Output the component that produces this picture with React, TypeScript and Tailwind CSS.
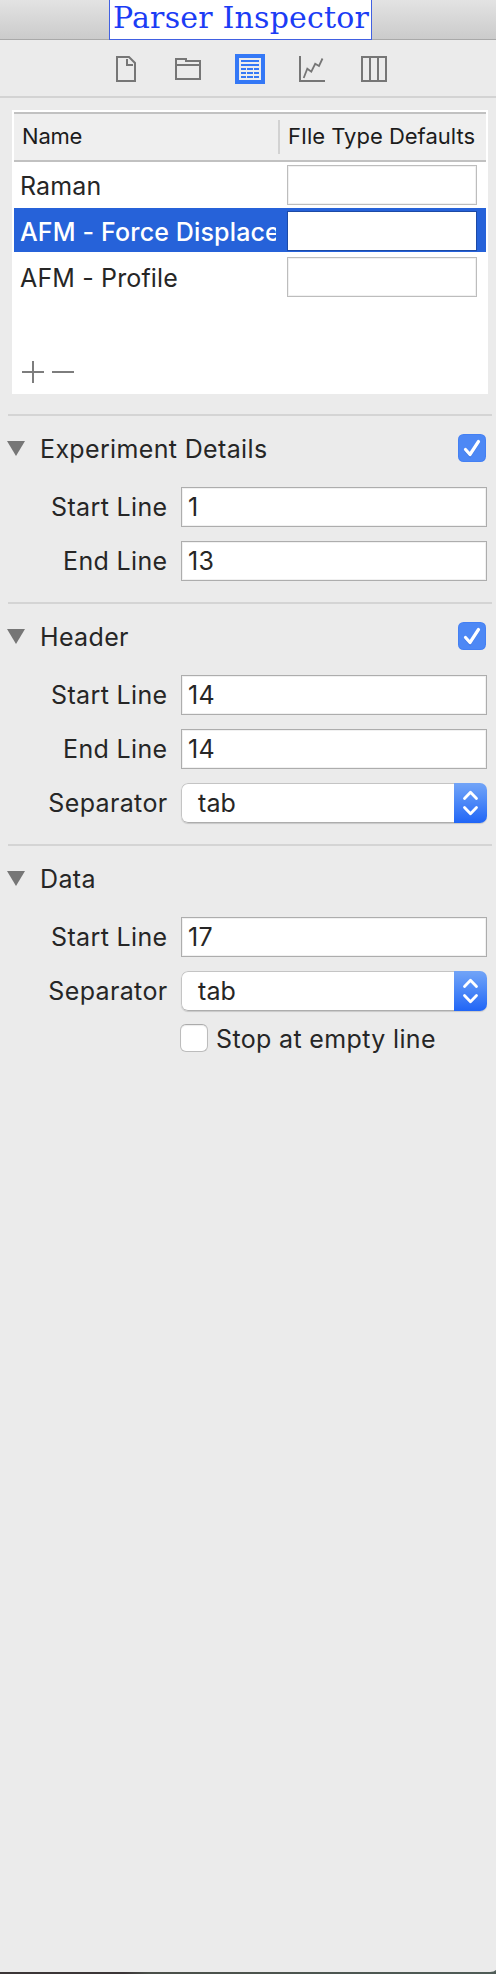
import type { ReactNode } from "react";

function TitleBar() {
  return (
    <header className="flex h-10 items-stretch border-b border-[#a9a9a9] bg-linear-to-b from-[#e3e3e3] to-[#cbcbcb] pl-[109px]">
      <h1 className="relative -mb-px h-10 w-[263px] whitespace-nowrap border border-t-0 border-[#4160e2] bg-white pl-[3px] font-['DejaVu_Serif',serif] text-[30px] leading-[36px] tracking-[0.2px] text-[#1b3cf5]">
        Parser Inspector
      </h1>
    </header>
  );
}

function Toolbar() {
  return (
    <nav className="flex h-[58px] items-start border-b-2 border-[#d3d3d3] pl-[116px] pt-[14px] text-[#767676]">
      <svg width="20" height="30" viewBox="0 0 20 30" fill="none" stroke="currentColor" strokeWidth="2">
        <path d="M1 3H13L19 9V27H1Z" />
        <path d="M11 5V11H17" />
      </svg>
      <svg className="ml-[39px]" width="26" height="30" viewBox="0 0 26 30" fill="none" stroke="currentColor" strokeWidth="2">
        <path d="M1 5H11V7H25V25H1Z" />
        <path d="M1 11H25" />
      </svg>
      <svg className="ml-[34px]" width="30" height="30" viewBox="0 0 30 30">
        <path d="M0 0H30V30H0Z" fill="#3478f6" />
        <path d="M4 4H26V26H4Z" fill="#ececec" />
        <path
          d="M6 7H24M6 11H24M6 15H11M12 15H18M19 15H24M6 19H11M12 19H18M19 19H24M6 23H11M12 23H18M19 23H24"
          stroke="#3478f6"
          strokeWidth="2"
        />
      </svg>
      <svg className="ml-[34px]" width="26" height="30" viewBox="0 0 26 30" fill="none" stroke="currentColor">
        <path d="M1 2V27H26" strokeWidth="2" />
        <path d="M4.700 24L8.300 14.700L12.300 17.700L16.200 9.800L20 12L23.500 4.500" strokeWidth="1.800" />
      </svg>
      <svg className="ml-9" width="26" height="30" viewBox="0 0 26 30" fill="none" stroke="currentColor" strokeWidth="2">
        <path d="M1 3H25V27H1ZM9 3V27M17 3V27" />
      </svg>
    </nav>
  );
}

function ParserRow({ name, selected = false }: { name: string; selected?: boolean }) {
  return (
    <div className={selected ? "mb-0.5 flex h-11 bg-[#2662d9] font-medium text-white" : "flex h-[46px] text-[#262626]"}>
      <div className="ml-1.5 h-11 w-[256px] overflow-hidden whitespace-nowrap leading-[49px] tracking-[0.15px]">
        {name}
      </div>
      <div
        className={
          selected
            ? "ml-[11px] mt-[3px] h-10 w-[190px] border border-[#1c4aa6] bg-white"
            : "ml-[11px] mt-[3px] h-10 w-[190px] border border-[#bdbdbd] bg-white shadow-[inset_0_0_0_1px_#f1f1f1]"
        }
      />
    </div>
  );
}

function ParserTable() {
  return (
    <div className="mx-[12px] mt-[12px] h-[284px] w-[476px] bg-white px-0.5 pt-0.5">
      <div className="flex h-[50px] w-[472px] border-y-2 border-[#c1c1c1] bg-[#efefef] text-[22px] leading-[44px] text-[#1c1c1c]">
        <div className="w-[264px] pl-[8px] tracking-[-0.2px]">Name</div>
        <div className="mt-1.5 h-[34px] w-0.5 bg-[#d2d2d2]" />
        <div className="whitespace-nowrap pl-[8px] tracking-normal">FIle Type Defaults</div>
      </div>
      <ParserRow name="Raman" />
      <ParserRow name="AFM - Force Displace" selected />
      <ParserRow name="AFM - Profile" />
      <svg className="ml-2 mt-[61px]" width="52" height="22" viewBox="0 0 52 22" stroke="#7d7d7d" strokeWidth="2">
        <path d="M0 11H22M11 0V22M30 11H52" />
      </svg>
    </div>
  );
}

function CheckedBox() {
  return (
    <svg className="ml-auto mr-2.5" width="28" height="28" viewBox="0 0 28 28" fill="none">
      <rect width="28" height="28" rx="5.500" fill="#4480f3" />
      <rect x="1" y="1" width="26" height="26" rx="4.500" fill="#4d88f5" />
      <path d="M7.500 15.500L12 20.800L20.500 7.500" stroke="#2f62c8" strokeOpacity="0.350" strokeWidth="3" strokeLinecap="round" transform="translate(0 1)" />
      <path d="M7.500 15.500L12 20.500L20.500 7.500" stroke="#fff" strokeWidth="3.200" strokeLinecap="round" strokeLinejoin="round" />
    </svg>
  );
}

function Section({ title, checked = false, children }: { title: string; checked?: boolean; children: ReactNode }) {
  return (
    <section className="pb-[21px]">
      <div className="ml-2 mr-1 h-0.5 bg-[#d4d4d4]" />
      <div className="flex h-16 items-center pl-[7px]">
        <svg width="18" height="15" viewBox="0 0 18 15">
          <path d="M0 0H18L9 15Z" fill="#767676" />
        </svg>
        <h2 className="pl-[15px] pt-0.5">{title}</h2>
        {checked && <CheckedBox />}
      </div>
      <div className="flex flex-col gap-3.5 pt-[7px]">{children}</div>
    </section>
  );
}

function Labeled({ label, children }: { label: string; children: ReactNode }) {
  return (
    <label className="flex h-10 items-center">
      <span className="w-[168px] pr-[0.5px] text-right">{label}</span>
      {children}
    </label>
  );
}

function Field({ label, value }: { label: string; value: string }) {
  return (
    <Labeled label={label}>
      <span className="ml-[13px] h-10 w-[306px] border border-[#adadad] bg-white pl-[6px] leading-[38px] shadow-[inset_0_0_0_1px_#f1f1f1]">
        {value}
      </span>
    </Labeled>
  );
}

function Popup({ label, value }: { label: string; value: string }) {
  return (
    <Labeled label={label}>
      <span className="ml-[13px] flex h-10 w-[306px] overflow-hidden rounded-[7px] shadow-[0_1px_1px_rgba(0,0,0,0.15)]">
        <span className="w-[273px] rounded-l-[7px] border border-r-0 border-[#c4c4c4] border-b-[#adadad] bg-white pl-4 leading-[38px] tracking-[0.1px]">
          {value}
        </span>
        <span className="h-10 w-[33px] bg-linear-to-b from-[#72a4f7] to-[#2065f6]">
          <svg width="33" height="40" viewBox="0 0 33 40" fill="none">
            <path
              d="M10.500 15.500L16.500 9.200L22.500 15.500M10.500 24.500L16.500 30.800L22.500 24.500"
              stroke="#fff"
              strokeWidth="2.800"
              strokeLinecap="round"
              strokeLinejoin="round"
            />
          </svg>
        </span>
      </span>
    </Labeled>
  );
}

export default function App() {
  return (
    <main className="flex h-[1974px] w-[496px] flex-col overflow-hidden bg-[#ebebeb] font-['Inter',sans-serif] text-[25px] leading-[30px] tracking-[0.35px] text-[#262626]">
      <TitleBar />
      <Toolbar />
      <ParserTable />
      <div className="mt-5">
        <Section title="Experiment Details" checked>
          <Field label="Start Line" value="1" />
          <Field label="End Line" value="13" />
        </Section>
        <Section title="Header" checked>
          <Field label="Start Line" value="14" />
          <Field label="End Line" value="14" />
          <Popup label="Separator" value="tab" />
        </Section>
        <Section title="Data">
          <Field label="Start Line" value="17" />
          <Popup label="Separator" value="tab" />
          <label className="-mt-px flex h-7 items-center pl-[180px]">
            <span className="size-7 rounded-[6px] border border-[#bcbcbc] border-t-[#ababab] bg-white shadow-[inset_0_1px_1px_#ececec]" />
            <span className="pl-2 pt-0.5">Stop at empty line</span>
          </label>
        </Section>
      </div>
      <div className="mt-auto flex flex-col">
        <svg className="self-end" width="6" height="2" viewBox="0 0 6 2">
          <path d="M6 0V2H0Q4 2 6 0Z" fill="#56635f" />
        </svg>
        <div className="h-0.5 bg-linear-to-r from-[#3b3537] from-25% via-[#4a4f49] via-30% to-[#4f5c57]" />
      </div>
    </main>
  );
}
